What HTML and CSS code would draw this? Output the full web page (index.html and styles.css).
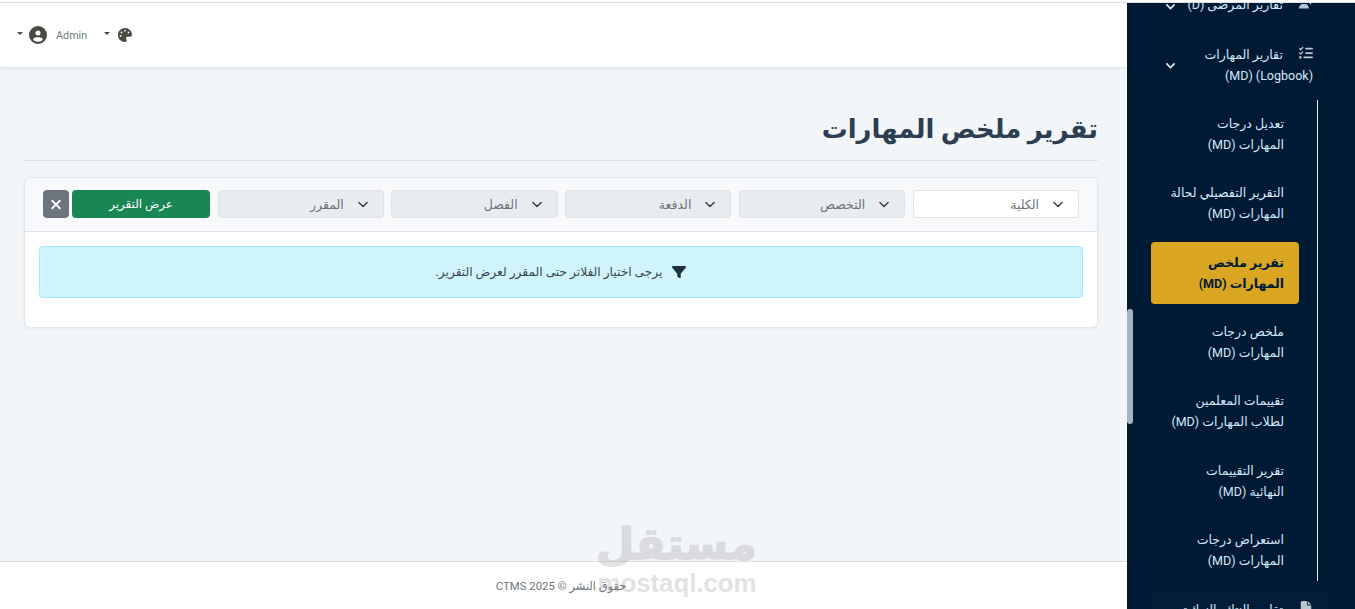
FILE: index.html
```html
<!DOCTYPE html>
<html lang="ar" dir="rtl">
<head>
<meta charset="UTF-8">
<meta name="viewport" content="width=device-width, initial-scale=1.0">
<title>تقرير ملخص المهارات</title>
<link rel="stylesheet" href="styles.css">
</head>
<body>
<div class="top-strip"></div>
<div class="layout">

  <!-- sidebar -->
  <aside class="sidebar">
    <div class="scroll-thumb"></div>
    <ul class="menu">
      <li class="menu-item menu-prev">
        <a href="#" class="menu-link">
          <span class="menu-text">
            <svg class="menu-icon" viewBox="0 0 640 512"><path d="M96 128a128 128 0 1 1 256 0A128 128 0 1 1 96 128zM0 482.3C0 383.8 79.8 304 178.3 304h91.4C368.2 304 448 383.8 448 482.3c0 16.4-13.3 29.7-29.7 29.7H29.7C13.3 512 0 498.7 0 482.3zM504 312V248H440c-13.3 0-24-10.7-24-24s10.7-24 24-24h64V136c0-13.3 10.7-24 24-24s24 10.7 24 24v64h64c13.3 0 24 10.7 24 24s-10.7 24-24 24H552v64c0 13.3-10.7 24-24 24s-24-10.7-24-24z"/></svg>
            تقارير المرضى (D)
          </span>
          <svg class="menu-chevron" viewBox="0 0 16 16"><path d="m2 5 6 6 6-6"/></svg>
        </a>
      </li>
      <li class="menu-item menu-open">
        <a href="#" class="menu-link">
          <span class="menu-text">
            <svg class="menu-icon" viewBox="0 0 512 512"><path d="M152.1 38.2c9.9 8.9 10.7 24 1.8 33.9l-72 80c-4.4 4.9-10.6 7.8-17.2 7.9s-12.9-2.4-17.6-7L7 113C-2.3 103.6-2.3 88.4 7 79s24.6-9.4 33.9 0l22.1 22.1 55.1-61.2c8.9-9.9 24-10.7 33.9-1.8zm0 160c9.9 8.9 10.7 24 1.8 33.9l-72 80c-4.4 4.9-10.6 7.8-17.2 7.9s-12.9-2.4-17.6-7L7 273c-9.4-9.4-9.4-24.6 0-33.9s24.6-9.4 33.9 0l22.1 22.1 55.1-61.2c8.9-9.9 24-10.7 33.9-1.8zM224 96c0-17.7 14.3-32 32-32H480c17.7 0 32 14.3 32 32s-14.3 32-32 32H256c-17.7 0-32-14.3-32-32zm0 160c0-17.7 14.3-32 32-32H480c17.7 0 32 14.3 32 32s-14.3 32-32 32H256c-17.7 0-32-14.3-32-32zM160 416c0-17.7 14.3-32 32-32H480c17.7 0 32 14.3 32 32s-14.3 32-32 32H192c-17.7 0-32-14.3-32-32zM48 368a48 48 0 1 1 0 96 48 48 0 1 1 0-96z"/></svg>
            تقارير المهارات<br><bdi>(MD) (Logbook)</bdi>
          </span>
          <svg class="menu-chevron" viewBox="0 0 16 16"><path d="m2 5 6 6 6-6"/></svg>
        </a>
        <ul class="submenu">
          <li><a href="#">تعديل درجات<br>المهارات (MD)</a></li>
          <li><a href="#">التقرير التفصيلي لحالة<br>المهارات (MD)</a></li>
          <li><a href="#" class="active">تقرير ملخص<br>المهارات (MD)</a></li>
          <li><a href="#">ملخص درجات<br>المهارات (MD)</a></li>
          <li><a href="#">تقييمات المعلمين<br>لطلاب المهارات (MD)</a></li>
          <li><a href="#">تقرير التقييمات<br>النهائية (MD)</a></li>
          <li><a href="#">استعراض درجات<br>المهارات (MD)</a></li>
        </ul>
      </li>
      <li class="menu-item menu-next">
        <a href="#" class="menu-link">
          <span class="menu-text">
            <svg class="menu-icon" viewBox="0 0 384 512"><path d="M64 0C28.7 0 0 28.7 0 64V448c0 35.3 28.7 64 64 64H320c35.3 0 64-28.7 64-64V160H256c-17.7 0-32-14.3-32-32V0H64zM256 0V128H384L256 0z"/></svg>
            تقارير النتائج النهائية
          </span>
        </a>
      </li>
    </ul>
  </aside>

  <div class="main">
    <!-- navbar -->
    <nav class="navbar">
      <div class="nav-tools">
        <a href="#" class="nav-drop">
          <svg class="nav-icon nav-palette" viewBox="0 0 512 512"><path d="M512 256c0 .9 0 1.8 0 2.7c-.4 36.5-33.6 61.3-70.1 61.3H344c-26.5 0-48 21.5-48 48c0 3.4 .4 6.7 1 9.9c2.1 10.2 6.5 20 10.8 29.9c6.1 13.8 12.1 27.5 12.1 42c0 31.8-21.6 60.7-53.4 62c-3.5 .1-7 .2-10.6 .2C114.6 512 0 397.4 0 256S114.6 0 256 0S512 114.6 512 256zM128 288a32 32 0 1 0 -64 0 32 32 0 1 0 64 0zm0-96a32 32 0 1 0 0-64 32 32 0 1 0 0 64zM288 96a32 32 0 1 0 -64 0 32 32 0 1 0 64 0zm96 96a32 32 0 1 0 0-64 32 32 0 1 0 0 64z"/></svg>
          <span class="caret"></span>
        </a>
        <a href="#" class="nav-drop nav-user">
          <span class="nav-name">Admin</span>
          <svg class="nav-icon" viewBox="0 0 512 512"><path d="M399 384.2C376.9 345.8 335.4 320 288 320H224c-47.4 0-88.9 25.8-111 64.2c35.2 39.2 86.2 63.8 143 63.8s107.8-24.7 143-63.8zM0 256a256 256 0 1 1 512 0A256 256 0 1 1 0 256zm256 16a72 72 0 1 0 0-144 72 72 0 1 0 0 144z"/></svg>
          <span class="caret"></span>
        </a>
      </div>
    </nav>

    <main class="content">
      <h1 class="page-title">تقرير ملخص المهارات</h1>

      <div class="card">
        <form class="card-header">
          <select class="filter"><option>الكلية</option></select>
          <select class="filter" disabled><option>التخصص</option></select>
          <select class="filter" disabled><option>الدفعة</option></select>
          <select class="filter" disabled><option>الفصل</option></select>
          <select class="filter" disabled><option>المقرر</option></select>
          <div class="filter-actions">
            <button type="button" class="btn-show">عرض التقرير</button>
            <button type="button" class="btn-reset" aria-label="مسح">
              <svg viewBox="0 0 384 512"><path d="M342.6 150.6c12.5-12.5 12.5-32.8 0-45.3s-32.8-12.5-45.3 0L192 210.7 86.6 105.4c-12.5-12.5-32.8-12.5-45.3 0s-12.5 32.8 0 45.3L146.7 256 41.4 361.4c-12.5 12.5-12.5 32.8 0 45.3s32.8 12.5 45.3 0L192 301.3 297.4 406.6c12.5 12.5 32.8 12.5 45.3 0s12.5-32.8 0-45.3L237.3 256 342.6 150.6z"/></svg>
            </button>
          </div>
        </form>
        <div class="card-body">
          <div class="alert">
            <svg class="alert-icon" viewBox="0 0 512 512"><path d="M3.9 54.9C10.5 40.9 24.5 32 40 32H472c15.5 0 29.5 8.9 36.1 22.9s4.6 30.5-5.2 42.5L320 320.9V448c0 12.1-6.8 23.2-17.7 28.6s-23.8 4.3-33.5-3l-64-48c-8.1-6-12.8-15.5-12.8-25.6V320.9L9 97.3C-.7 85.4-2.8 68.8 3.9 54.9z"/></svg>
            يرجى اختيار الفلاتر حتى المقرر لعرض التقرير.
          </div>
        </div>
      </div>
    </main>

    <footer class="footer">حقوق النشر © 2025 CTMS</footer>
  </div>
</div>

<!-- watermark -->
<div class="watermark">
  <div class="wm-ar">مستقل</div>
  <div class="wm-en">mostaql.com</div>
</div>
</body>
</html>
```

FILE: styles.css
```css
* {
  box-sizing: border-box;
}

html, body {
  height: 100%;
}

body {
  margin: 0;
  display: flex;
  flex-direction: column;
  overflow: hidden;
  background-color: #fff;
  font-family: Roboto, "DejaVu Sans", sans-serif;
  color: #212529;
}

a {
  text-decoration: none;
  color: inherit;
}

ul {
  list-style: none;
  margin: 0;
  padding: 0;
}

.top-strip {
  height: 3px;
  flex: none;
  background-color: #fff;
  border-bottom: 1px solid #dfe2e5;
}

.layout {
  flex: 1;
  display: flex;
  min-height: 0;
}

/* sidebar */
.sidebar {
  position: relative;
  width: 228px;
  flex: none;
  overflow: hidden;
  background-color: #001a33;
  color: #d4e8fb;
  font-size: 12.5px;
  line-height: 21px;
}

.scroll-thumb {
  position: absolute;
  left: 0;
  top: 306px;
  width: 6px;
  height: 115px;
  border-radius: 3px;
  background-color: #a8b4c4;
}

.menu {
  margin-top: -19px;
}

.menu-link {
  display: flex;
  align-items: center;
  justify-content: space-between;
  padding: 10px 14px 10px 0;
  margin: 0 28px 7px 24px;
}

.menu-text {
  width: 124px;
  white-space: nowrap;
}

.menu-icon {
  width: 14px;
  height: 14px;
  margin-left: 13px;
  vertical-align: -1px;
  fill: #b9c6d3;
}

.menu-chevron {
  width: 11px;
  height: 11px;
  margin-left: 14px;
  fill: none;
  stroke: #e6eef6;
  stroke-width: 2.4;
}

.menu-prev {
  margin-bottom: 9px;
}

.menu-prev .menu-chevron {
  margin-top: 4px;
}

.menu-open .menu-link {
  margin-bottom: 4px;
}

.menu-next {
  margin-top: 6px;
}

.menu-next .menu-link {
  background-color: #001c36;
}

.submenu {
  margin: 0 37px 0 24px;
  padding: 3px 18px 0 0;
  border-right: 1px solid #e8eef4;
}

.submenu a {
  display: block;
  height: 62px;
  margin-bottom: 7.33px;
  padding: 10px 15px;
  border-radius: 4px;
}

.submenu li:last-child a {
  margin-bottom: 8px;
}

.submenu a.active {
  background-color: #daa520;
  color: #001a33;
  font-weight: 700;
}

/* main area */
.main {
  flex: 1;
  min-width: 0;
  display: flex;
  flex-direction: column;
  background-color: #f3f6f9;
}

.navbar {
  height: 65px;
  flex: none;
  display: flex;
  align-items: center;
  padding: 0 17px;
  background-color: #fff;
  border-bottom: 1px solid #e3e6e8;
  box-shadow: 0 1px 3px rgba(0, 0, 0, 0.05);
}

.nav-tools {
  margin-right: auto;
  display: flex;
  align-items: center;
  gap: 17px;
}

.nav-drop {
  display: flex;
  align-items: center;
  gap: 8px;
  color: #4a4f45;
}

.nav-user {
  gap: 6px;
}

.nav-icon {
  width: 18px;
  height: 18px;
  fill: #4a4a42;
}

.nav-palette {
  width: 14px;
  height: 14px;
}

.nav-name {
  margin-left: 3px;
  font-size: 10.8px;
  color: #6f7d78;
}

.caret {
  width: 0;
  height: 0;
  border-top: 3px solid #4a4a42;
  border-left: 3px solid transparent;
  border-right: 3px solid transparent;
  margin-top: -4px;
}

.content {
  flex: 1;
  padding: 41px 29px 0 24px;
}

.page-title {
  margin: 0 0 16px;
  padding-bottom: 12px;
  height: 52px;
  border-bottom: 1px solid #dee2e6;
  font-size: 25.9px;
  font-weight: 700;
  line-height: 40px;
  color: #2c3e50;
}

.card {
  background-color: #fff;
  border: 1px solid #e3e6ea;
  border-radius: 6px;
  box-shadow: 0 1px 3px rgba(0, 0, 0, 0.06);
}

.card-header {
  display: flex;
  gap: 7.5px;
  padding: 12px 18px 13px;
  background-color: #f8f9fa;
  border-bottom: 1px solid #dee2e6;
  border-radius: 6px 6px 0 0;
}

.filter {
  flex: 1;
  min-width: 0;
  height: 28px;
  padding: 0 39px 0 8px;
  appearance: none;
  font-family: inherit;
  font-size: 12.5px;
  color: #6c757d;
  background-color: #fff;
  background-image: url("data:image/svg+xml,%3csvg xmlns='http://www.w3.org/2000/svg' viewBox='0 0 16 16'%3e%3cpath fill='none' stroke='%23343a40' stroke-linecap='round' stroke-linejoin='round' stroke-width='2' d='m2 5 6 6 6-6'/%3e%3c/svg%3e");
  background-repeat: no-repeat;
  background-position: right 14px center;
  background-size: 12px 11px;
  border: 1px solid #dee2e6;
  border-radius: 4px;
}

.filter:disabled {
  background-color: #e9ecef;
  opacity: 1;
}

.filter-actions {
  flex: none;
  display: flex;
  gap: 3px;
}

.btn-show {
  width: 138px;
  height: 28px;
  padding: 0;
  font-family: inherit;
  font-size: 11.8px;
  color: #fff;
  background-color: #198754;
  border: 0;
  border-radius: 4px;
}

.btn-reset {
  width: 26px;
  height: 28px;
  padding: 0;
  display: flex;
  align-items: center;
  justify-content: center;
  background-color: #6c757d;
  border: 0;
  border-radius: 4px;
}

.btn-reset svg {
  width: 12px;
  height: 15px;
  fill: #fff;
}

.card-body {
  padding: 14px 14px 29px;
}

.alert {
  height: 52px;
  display: flex;
  align-items: center;
  justify-content: center;
  gap: 10px;
  font-size: 12.2px;
  color: #3a4750;
  background-color: #cff4fc;
  border: 1px solid #9eeaf9;
  border-radius: 4px;
}

.alert-icon {
  width: 14px;
  height: 14px;
  fill: #20323f;
}

.footer {
  height: 48px;
  flex: none;
  display: flex;
  align-items: center;
  justify-content: center;
  padding: 1px 5px 0 0;
  font-size: 11.4px;
  color: #6c757d;
  background-color: #fff;
  border-top: 1px solid #dee2e6;
}

/* watermark over the page */
.watermark {
  position: absolute;
  left: 597px;
  top: 518px;
  width: 160px;
  text-align: center;
  color: #808080;
  opacity: 0.22;
  font-weight: 700;
  pointer-events: none;
}

.wm-ar {
  font-size: 44px;
  line-height: 52px;
  -webkit-text-stroke: 1.5px #808080;
}

.wm-en {
  font-size: 25.8px;
  line-height: 26px;
  font-family: "Liberation Sans", sans-serif;
}
```
